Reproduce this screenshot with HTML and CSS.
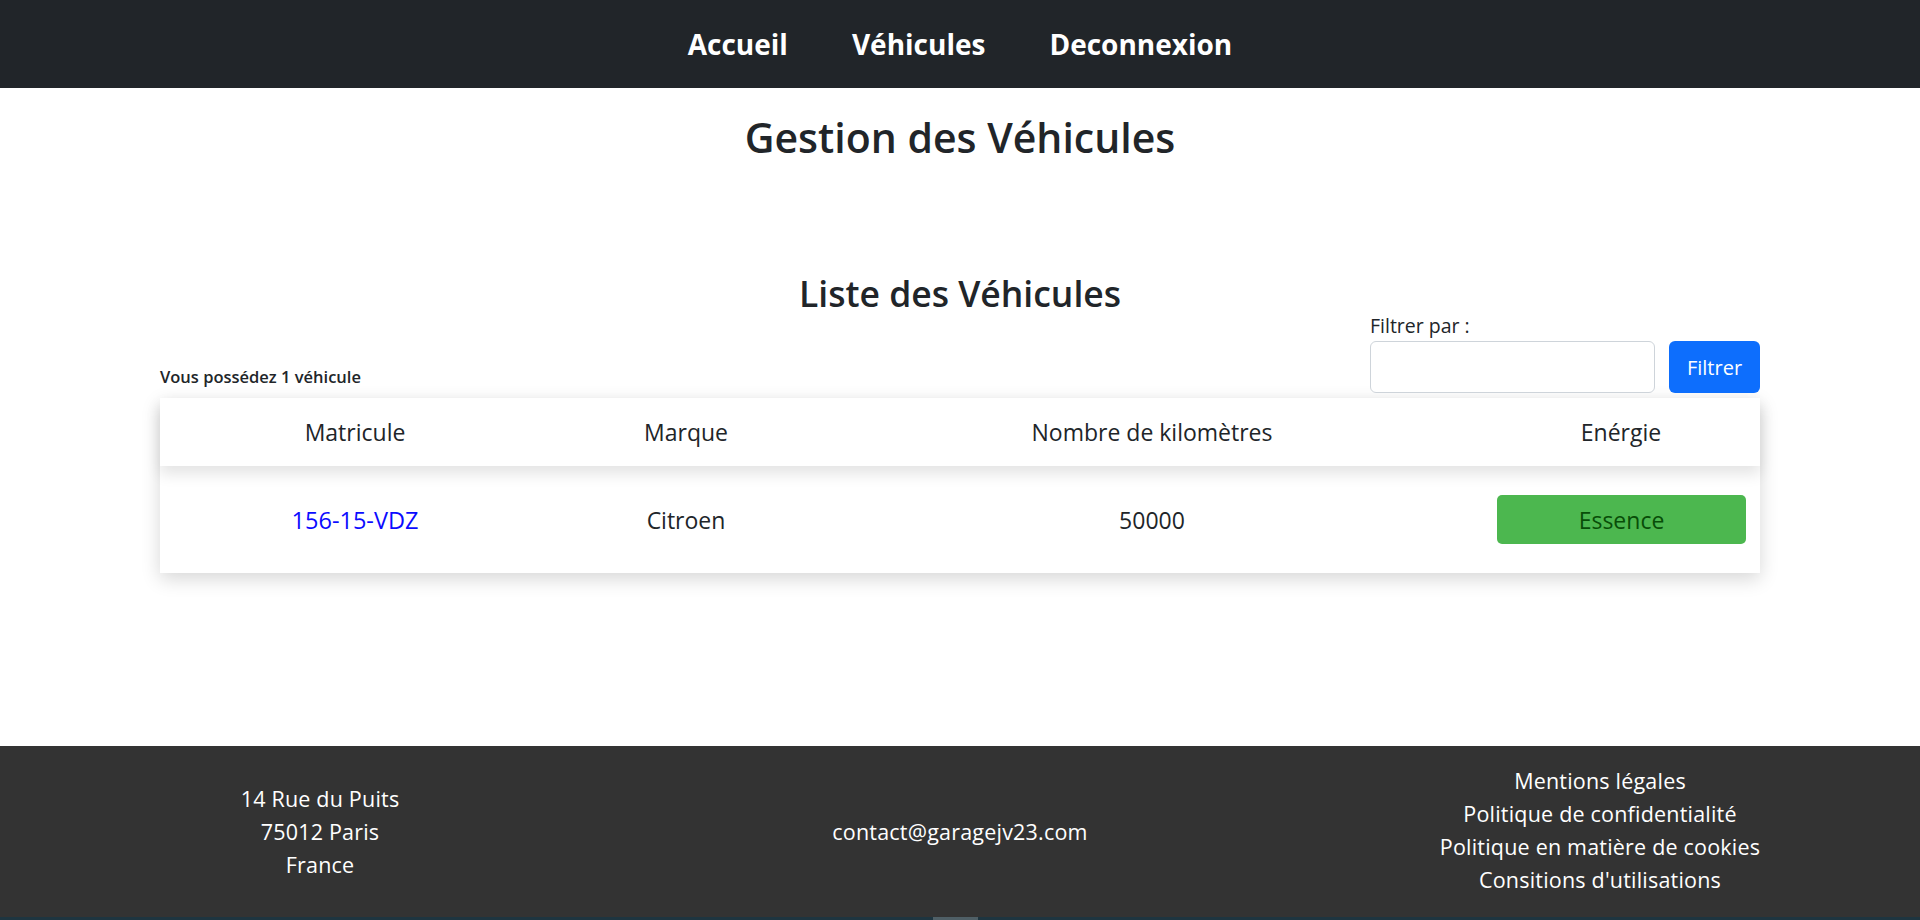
FILE: index.html
```html
<!DOCTYPE html>
<html lang="fr">
<head>
<meta charset="utf-8">
<title>Gestion des Véhicules</title>
<link rel="stylesheet" href="styles.css">
</head>
<body>
<nav class="topnav">
  <a class="nav-link" href="#">Accueil</a>
  <a class="nav-link" href="#">Véhicules</a>
  <a class="nav-link" href="#">Deconnexion</a>
</nav>
<main class="page">
  <h1 class="page-title">Gestion des Véhicules</h1>
  <section class="vehicles">
    <h2 class="section-title">Liste des Véhicules</h2>
    <div class="toolbar">
      <p class="count">Vous possédez 1 véhicule</p>
      <form class="filter">
        <label class="filter-label" for="filter">Filtrer par :</label>
        <div class="filter-row">
          <input class="filter-input" id="filter" type="text">
          <button class="btn-filter" type="button">Filtrer</button>
        </div>
      </form>
    </div>
    <div class="vtable">
      <div class="vrow vhead">
        <div class="vcell">Matricule</div>
        <div class="vcell">Marque</div>
        <div class="vcell">Nombre de kilomètres</div>
        <div class="vcell">Enérgie</div>
      </div>
      <div class="vrow vbody">
        <div class="vcell"><a class="plate" href="#">156-15-VDZ</a></div>
        <div class="vcell">Citroen</div>
        <div class="vcell">50000</div>
        <div class="vcell cell-energy"><span class="energy">Essence</span></div>
      </div>
    </div>
  </section>
</main>
<footer class="footer">
  <div class="fcol">
    <p>14 Rue du Puits</p>
    <p>75012 Paris</p>
    <p>France</p>
  </div>
  <div class="fcol">
    <p>contact@garagejv23.com</p>
  </div>
  <div class="fcol fcol-links">
    <p>Mentions légales</p>
    <p>Politique de confidentialité</p>
    <p>Politique en matière de cookies</p>
    <p>Consitions d'utilisations</p>
  </div>
</footer>
<div class="bottom-strip"><span class="strip-block"></span></div>
</body>
</html>
```

FILE: styles.css
```css
* { box-sizing: border-box; }

html, body {
  margin: 0;
  padding: 0;
}

body {
  font-family: "Open Sans", "Noto Sans", sans-serif;
  color: #212529;
  background: #fff;
  min-height: 920px;
  display: flex;
  flex-direction: column;
}

.topnav {
  height: 88px;
  background: #212529;
  display: flex;
  justify-content: center;
  align-items: center;
  gap: 64px;
}

.nav-link {
  color: #fff;
  text-decoration: none;
  font-weight: 700;
  font-size: 28px;
}

.page {
  flex: 1;
  padding-top: 25px;
}

.page-title {
  margin: 0;
  text-align: center;
  font-size: 41px;
  font-weight: 600;
  line-height: 1.2;
}

.vehicles {
  width: 1600px;
  margin: 110px auto 0;
}

.section-title {
  margin: 0;
  text-align: center;
  font-size: 35.5px;
  font-weight: 600;
  line-height: 42px;
}

.toolbar {
  display: flex;
  justify-content: space-between;
  align-items: flex-end;
}

.count {
  margin: 0 0 4px;
  font-size: 16.5px;
  font-weight: 600;
  line-height: 24px;
}

.filter {
  display: flex;
  flex-direction: column;
}

.filter-label {
  font-size: 19.5px;
  line-height: 24px;
}

.filter-row {
  margin-top: 3px;
  display: flex;
  gap: 14px;
}

.filter-input {
  width: 285px;
  height: 52px;
  border: 1px solid #ced4da;
  border-radius: 6px;
  background: #fff;
}

.btn-filter {
  width: 91px;
  height: 52px;
  border: none;
  border-radius: 6px;
  background: #0d6efd;
  color: #fff;
  font-family: inherit;
  font-size: 20px;
}

.vtable {
  margin-top: 5px;
  background: #fff;
  box-shadow: 0 6px 18px rgba(0, 0, 0, 0.16);
}

.vrow {
  display: grid;
  grid-template-columns: 390px 272px 660px 278px;
  align-items: center;
  font-size: 23px;
}

.vhead {
  height: 68px;
  position: relative;
  z-index: 1;
  background: #fff;
  box-shadow: 0 8px 14px rgba(0, 0, 0, 0.11);
}

.vbody {
  height: 107px;
  background: #fff;
}

.vcell {
  text-align: center;
}

.cell-energy {
  padding: 0 14px 0 15px;
}

.plate {
  color: #0b0bff;
  text-decoration: none;
  font-size: 23.5px;
}

.energy {
  display: flex;
  align-items: center;
  justify-content: center;
  height: 49px;
  border-radius: 5px;
  background: #4cb74f;
  color: #084d08;
}

.footer {
  height: 171px;
  background: #333333;
  color: #fff;
  display: grid;
  grid-template-columns: 1fr 1fr 1fr;
  align-items: center;
  font-size: 21.5px;
  letter-spacing: 0.2px;
}

.fcol {
  text-align: center;
}

.fcol-links {
  margin-top: -3px;
}

.fcol p {
  margin: 0;
  line-height: 33px;
}

.bottom-strip {
  height: 3px;
  background: #1e3540;
  display: flex;
  padding-left: 933px;
}

.strip-block {
  width: 45px;
  background: #4f5f66;
}
```
